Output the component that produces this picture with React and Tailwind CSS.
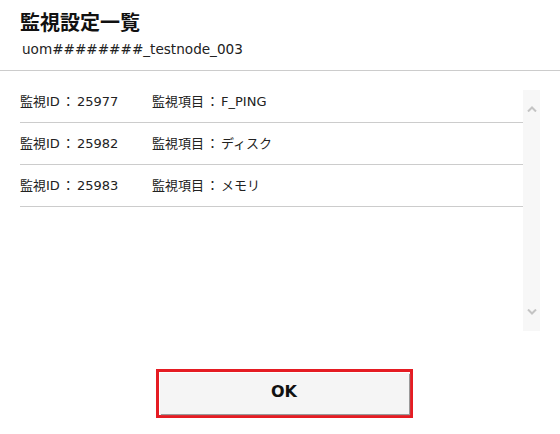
export default function App() {
  const rows = [
    { id: "25977", item: "F_PING" },
    { id: "25982", item: "ディスク" },
    { id: "25983", item: "メモリ" },
  ];
  const mixed = { fontFamily: '"DejaVu Sans", "Noto Sans CJK JP", sans-serif' };
  const cjk = { fontFamily: '"Noto Sans CJK JP", sans-serif' };
  return (
    <div
      className="w-[560px] h-[434px] bg-white text-[#222] flex flex-col overflow-hidden"
      style={{ fontFamily: '"Noto Sans CJK JP", "Noto Sans", sans-serif' }}
    >
      <div className="px-5 pt-[10px] pb-[11px] border-b border-[#cccccc]">
        <div className="text-[20px] font-bold leading-[24px] text-[#111]">監視設定一覧</div>
        <div className="text-[13.6px] leading-[20px] mt-[5px] pl-[2px] text-[#222]" style={mixed}>
          uom########_testnode_003
        </div>
      </div>
      <div className="flex items-start pl-5 pr-5 h-[298px]">
        <div className="flex-1 pt-[10px]">
          {rows.map((r) => (
            <div
              key={r.id}
              className="h-[42px] flex items-center border-b border-[#cccccc] text-[13px] text-[#222]"
              style={mixed}
            >
              <div className="w-[132px]">
                監視ID<span className="px-[2px]" style={cjk}>：</span>
                {r.id}
              </div>
              <div>
                監視項目<span className="px-[2px]" style={cjk}>：</span>
                {r.item}
              </div>
            </div>
          ))}
        </div>
        <div className="w-[17px] h-[241px] mt-[19px] bg-[#f7f7f7] flex flex-col items-center justify-between py-[16px]">
          <svg width="10" height="6" viewBox="0 0 10 6">
            <path d="M1 5.5 L5 1.5 L9 5.5" fill="none" stroke="#c4c4c4" strokeWidth="2" />
          </svg>
          <svg width="10" height="6" viewBox="0 0 10 6">
            <path d="M1 0.5 L5 4.5 L9 0.5" fill="none" stroke="#c4c4c4" strokeWidth="2" />
          </svg>
        </div>
      </div>
      <div className="flex justify-center pl-[8px]">
        <div className="w-[257px] h-[49px] border-[3px] border-[#e51c23] p-[1px] bg-white">
          <button
            className="w-full h-full bg-[#f5f5f5] shadow-[1px_1px_1px_#9a9a9a] text-[16px] font-bold text-[#111] flex items-center justify-center pb-[3px]"
            style={mixed}
          >
            OK
          </button>
        </div>
      </div>
    </div>
  );
}
